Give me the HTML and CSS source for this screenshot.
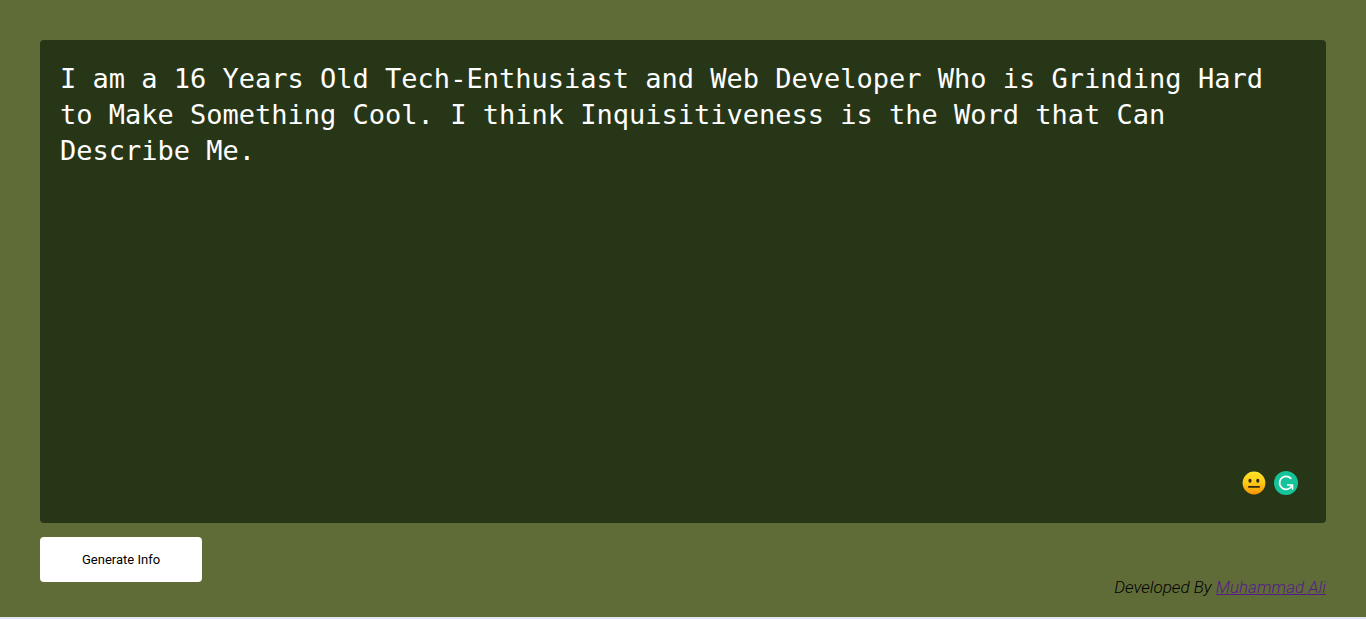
FILE: index.html
```html
<!DOCTYPE html>
<html lang="en">
<head>
  <meta charset="utf-8">
  <meta name="viewport" content="width=device-width, initial-scale=1">
  <title>Info Generator</title>
  <link rel="stylesheet" href="styles.css">
</head>
<body class="page">
  <main class="editor">
    <textarea class="editor-text" aria-label="Generated info" spellcheck="false">I am a 16 Years Old Tech-Enthusiast and Web Developer Who is Grinding Hard to Make Something Cool. I think Inquisitiveness is the Word that Can Describe Me.</textarea>
    <div class="assistant">
      <button class="assistant-button" type="button" aria-label="Tone">
        <svg class="assistant-icon" viewBox="0 0 24 24" aria-hidden="true">
          <defs>
            <linearGradient id="face" x1="0" y1="0" x2="0" y2="1">
              <stop offset="0" stop-color="#ffe32b"/>
              <stop offset="0.5" stop-color="#fdc916"/>
              <stop offset="1" stop-color="#f99404"/>
            </linearGradient>
          </defs>
          <circle cx="12" cy="12" r="11.4" fill="url(#face)"/>
          <ellipse cx="8" cy="9.8" rx="1.6" ry="2" fill="#30271a"/>
          <ellipse cx="15.8" cy="9.8" rx="1.6" ry="2" fill="#30271a"/>
          <path d="M6.8 15.9h10.4" stroke="#30271a" stroke-width="1.6" stroke-linecap="round"/>
        </svg>
      </button>
      <button class="assistant-button" type="button" aria-label="Writing assistant">
        <svg class="assistant-icon" viewBox="0 0 24 24" aria-hidden="true">
          <circle cx="12" cy="12" r="12" fill="#15c39a"/>
          <path d="M16.8 7.4A6.5 6.5 0 1 0 18.1 14.2" fill="none" stroke="#fff" stroke-width="1.7" stroke-linecap="round"/>
          <path d="M13.6 14h4.9v4" fill="none" stroke="#fff" stroke-width="1.6" stroke-linecap="round" stroke-linejoin="round"/>
        </svg>
      </button>
    </div>
  </main>
  <footer class="footer">
    <button class="generate" type="button">Generate Info</button>
    <p class="credit">Developed By <a class="credit-link" href="#">Muhammad Ali</a></p>
  </footer>
</body>
</html>
```
FILE: styles.css
```css
* {
  box-sizing: border-box;
}

.page {
  display: flex;
  flex-direction: column;
  gap: 14px;
  min-height: 100vh;
  margin: 0;
  padding: 40px 40px 20px;
  border-bottom: 2px solid #dfe6f1;
  background: #606c38;
  font-family: Roboto, sans-serif;
}

.editor {
  position: relative;
  display: flex;
  flex: 1;
}

.editor-text {
  flex: 1;
  min-width: 0;
  padding: 21px 20px;
  border: 0;
  border-radius: 4px;
  outline: 0;
  resize: none;
  background: #283618;
  color: #fff;
  font-family: Consolas, "DejaVu Sans Mono", monospace;
  font-size: 27px;
  line-height: 36px;
}

.assistant {
  position: absolute;
  right: 28px;
  bottom: 28px;
  display: flex;
  gap: 8px;
}

.assistant-button {
  padding: 0;
  border: 0;
  background: none;
}

.assistant-icon {
  display: block;
  width: 24px;
  height: 24px;
}

.footer {
  display: flex;
  align-items: flex-start;
  justify-content: space-between;
  min-height: 60px;
}

.generate {
  padding: 15px 42px;
  border: 0;
  border-radius: 4px;
  background: #fff;
  color: #000;
  font-family: Roboto, sans-serif;
  font-size: 13px;
  line-height: 15px;
}

.credit {
  align-self: flex-end;
  margin: 0;
  color: #000;
  font-size: 17px;
  font-style: italic;
  font-weight: 300;
  line-height: 19px;
}

.credit-link {
  color: #551a8b;
}
```
